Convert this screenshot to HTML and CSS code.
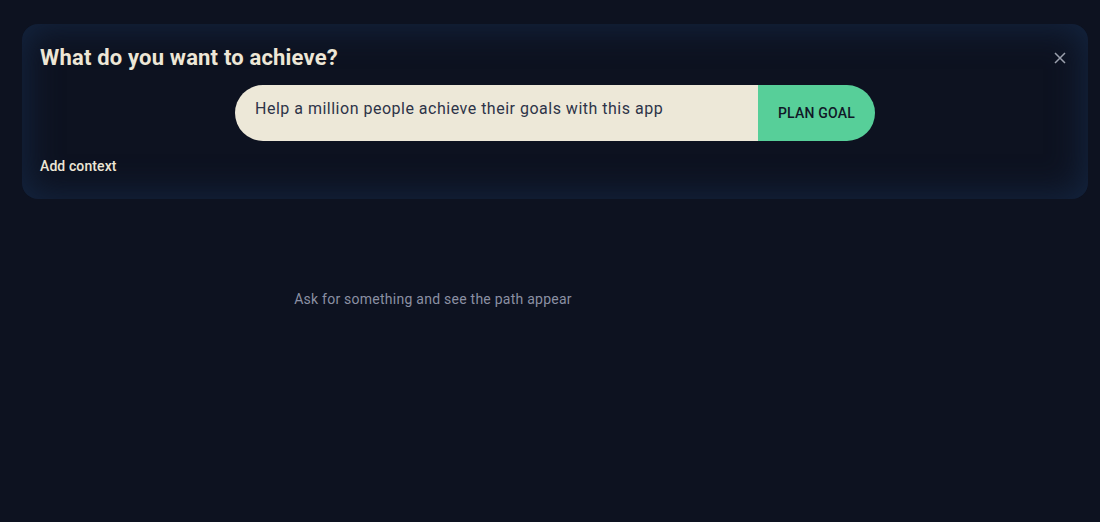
FILE: index.html
```html
<!DOCTYPE html>
<html lang="en">
<head>
    <meta charset="UTF-8">
    <meta name="viewport" content="width=device-width, initial-scale=1.0">
    <title>Goal Planner</title>
    <link rel="stylesheet" href="styles.css">
</head>
<body>
    <div class="planner">
        <div class="planner-head">
            <h1>What do you want to achieve?</h1>
            <button class="close-btn" aria-label="Close">
                <svg width="12" height="12" viewBox="0 0 12 12"><path d="M1 1L11 11M11 1L1 11" stroke="currentColor" stroke-width="1.5"/></svg>
            </button>
        </div>

        <form class="goal-form">
            <input class="goal-input" type="text" value="Help a million people achieve their goals with this app">
            <button class="goal-btn" type="button">PLAN GOAL</button>
        </form>

        <a class="context-link" href="#">Add context</a>
    </div>

    <div class="workspace">
        <div class="path-view">
            <p class="empty-msg">Ask for something and see the path appear</p>
        </div>
        <div class="side-view"></div>
    </div>
</body>
</html>
```

FILE: styles.css
```css
body {
    font-family: Roboto, "Liberation Sans", sans-serif;
    background-color: #0d1220;
    margin: 0;
    padding: 24px 12px 0 22px;
    color: #ede6d6;
}

.planner {
    background: #0d1220;
    border-radius: 16px;
    box-shadow: inset 0 0 34px 4px #142540;
    padding: 20px 18px 24px 18px;
}

.planner-head {
    display: flex;
    align-items: center;
    justify-content: space-between;
}

h1 {
    margin: 0;
    font-size: 22px;
    font-weight: bold;
    letter-spacing: 0.18px;
    color: #ede6d6;
    line-height: 28px;
}

.close-btn {
    background: none;
    border: none;
    padding: 0;
    color: #9ba0ad;
    width: 20px;
    height: 20px;
    display: flex;
    align-items: center;
    justify-content: center;
    cursor: pointer;
}

.goal-form {
    display: flex;
    width: 640px;
    margin: 13px auto 0 auto;
    height: 56px;
}

.goal-input {
    flex: 1;
    border: none;
    outline: none;
    background: #ede8d8;
    border-radius: 28px 0 0 28px;
    padding: 0 20px 9px 20px;
    font-family: inherit;
    font-size: 16px;
    letter-spacing: 0.5px;
    color: #2d3448;
}

.goal-btn {
    width: 117px;
    border: none;
    background: #57cf99;
    color: #111827;
    border-radius: 0 28px 28px 0;
    font-family: inherit;
    font-size: 14px;
    font-weight: 500;
    letter-spacing: 0.2px;
    padding: 0;
    cursor: pointer;
}

.context-link {
    display: inline-block;
    margin-top: 17px;
    font-size: 14px;
    font-weight: 500;
    letter-spacing: 0.1px;
    color: #ede6d6;
    text-decoration: none;
}

.workspace {
    display: flex;
}

.path-view {
    width: 822px;
    text-align: center;
    padding-top: 92px;
}

.side-view {
    flex: 1;
}

.empty-msg {
    margin: 0;
    font-size: 14px;
    letter-spacing: 0.25px;
    color: #8b90a3;
}
```
